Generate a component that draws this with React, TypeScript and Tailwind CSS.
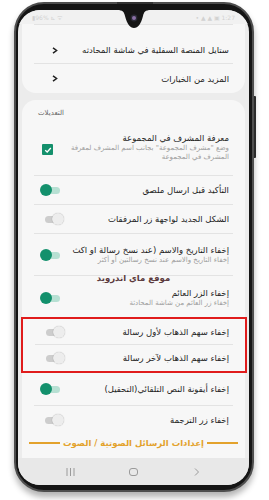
import React from 'react'

// ------------------------------------------------------------
// Small widgets
// ------------------------------------------------------------

function Toggle({ on }: { on: boolean }) {
  return (
    <div className="relative w-[24px] h-[12px] shrink-0">
      {on ? (
        <>
          <div className="absolute left-[5px] right-[4px] top-[3px] h-[7px] rounded-full bg-[#b7e0d3]" />
          <div className="absolute left-0 top-0 w-[12px] h-[12px] rounded-full bg-[#13906c]" />
        </>
      ) : (
        <>
          <div className="absolute left-[5px] right-[4px] top-[3px] h-[7px] rounded-full bg-[#cdcdcd]" />
          <div className="absolute right-0 top-0 w-[12px] h-[12px] rounded-full bg-[#ededed] shadow-[0_0_1px_rgba(0,0,0,0.35)]" />
        </>
      )}
    </div>
  )
}

function Checkbox() {
  return (
    <div className="w-[24px] shrink-0 flex justify-end pl-[2px]">
      <div className="w-[11px] h-[11px] rounded-[1px] bg-[#14906c] flex items-center justify-center">
        <svg width="8" height="8" viewBox="0 0 8 8">
          <path d="M1.2 4.2 L3.2 6 L6.8 2" fill="none" stroke="#fff" strokeWidth="1.3" />
        </svg>
      </div>
    </div>
  )
}

function Sep() {
  return <div className="mx-[12px] h-px bg-[#e3e3e3] shrink-0" />
}

// ------------------------------------------------------------
// Rows
// ------------------------------------------------------------

function Row({
  title,
  summary,
  widget,
  h,
}: {
  title: string
  summary?: string
  widget: React.ReactNode
  h: string
}) {
  return (
    <div dir="rtl" className={`flex items-center pr-[16px] pl-[18px] gap-[10px] shrink-0 ${h}`}>
      <div className="flex-1 min-w-0">
        <div className="text-[8.5px] leading-[12px] text-[#1e1e1e] whitespace-nowrap">{title}</div>
        {summary && (
          <div className="text-[7px] leading-[9px] text-[#9d9d9d] whitespace-nowrap">{summary}</div>
        )}
      </div>
      {widget}
    </div>
  )
}

function LinkRow({ title, h, extra }: { title: string; h: string; extra?: string }) {
  return (
    <div dir="rtl" className={`flex items-center pr-[16px] pl-[18px] shrink-0 ${h} ${extra ?? ''}`}>
      <div className="flex-1 text-[8.5px] leading-[12px] text-[#1e1e1e]">{title}</div>
      <svg width="6" height="7" viewBox="0 0 6 7" className="shrink-0">
        <path d="M1 0.8 L4.6 3.5 L1 6.2" fill="none" stroke="#222" strokeWidth="1.5" />
      </svg>
      <div className="w-[12px] shrink-0" />
    </div>
  )
}

// ------------------------------------------------------------
// App
// ------------------------------------------------------------

export default function App() {
  return (
    <div className="w-[269px] h-[500px] bg-white overflow-hidden font-['DejaVu_Sans',sans-serif] pt-[2px] pl-[14px]">
      {/* Phone body */}
      <div className="relative w-[240px] h-[490px] rounded-[30px] bg-[#151515] border-2 border-[#4e4e4e] pt-[6px] pb-[5px] pl-[2px] pr-[3px] shadow-[0_5px_6px_rgba(0,0,0,0.3)]">
        {/* side button */}
        <div className="absolute -right-[4px] top-[92px] w-[2px] h-[62px] bg-[#2a2a2a] rounded-r-[1px]" />
        {/* speaker */}
        <div className="absolute left-[101px] top-[-2px] w-[36px] h-[2px] bg-[#333]" />

        {/* Screen */}
        <div className="relative h-full rounded-[22px] overflow-hidden bg-[#ececec] flex flex-col">
          {/* notch */}
          <div className="absolute left-[99px] top-0 w-[34px] h-[20px]">
            <svg width="34" height="20" viewBox="0 0 34 20">
              <path d="M0 0 C6 0 7 2 8 6 C10 14 13 18 17 18 C21 18 24 14 26 6 C27 2 28 0 34 0 Z" fill="#151515" />
              <circle cx="17" cy="8" r="3.4" fill="#2a2a35" />
              <circle cx="17" cy="8" r="2" fill="#8a6fa5" />
            </svg>
          </div>

          {/* status bar */}
          <div className="h-[14px] shrink-0 flex items-center justify-between px-[14px] text-[6px] text-[#d2d2d2] bg-[#f1f1f1]">
            <span>▮96% ⊾ ᯤ</span>
            <span>• ▲ ▲ ▣ 1:27</span>
          </div>

          {/* content */}
          <div className="flex-1 min-h-0 overflow-hidden flex flex-col">
            {/* card 1 */}
            <div className="mx-[4px] rounded-b-[14px] bg-[#f7f7f7] flex flex-col shrink-0">
              <Sep />
              <LinkRow title="ستايل المنصة السفلية في شاشة المحادثه" h="h-[38px]" extra="pt-[12px]" />
              <Sep />
              <LinkRow title="المزيد من الخيارات" h="h-[29px]" />
            </div>

            {/* card 2 */}
            <div className="relative mt-[7px] mx-[4px] rounded-t-[14px] bg-[#f7f7f7] flex flex-col shrink-0">
              <div className="h-[27px] shrink-0 pl-[16px] pt-[9px] text-[7px] leading-[9px] text-[#666]">التعديلات</div>

              <div dir="rtl" className="flex items-start pr-[16px] pl-[18px] gap-[10px] h-[48px] pt-[5px] shrink-0">
                <div className="flex-1 min-w-0">
                  <div className="text-[8.5px] leading-[12px] text-[#1e1e1e]">معرفة المشرف في المجموعة</div>
                  <div className="text-[7px] leading-[9px] text-[#9d9d9d] whitespace-nowrap">
                    وضع "مشرف المجموعة" بجانب اسم المشرف لمعرفة
                    <br />
                    المشرف في المجموعة
                  </div>
                </div>
                <div className="pt-[12px]">
                  <Checkbox />
                </div>
              </div>
              <Sep />
              <Row title="التأكيد قبل ارسال ملصق" widget={<Toggle on />} h="h-[28px]" />
              <Sep />
              <Row title="الشكل الجديد لواجهة زر المرفقات" widget={<Toggle on={false} />} h="h-[28px]" />
              <Sep />
              <Row
                title="إخفاء التاريخ والاسم (عند نسخ رسالة او اكث"
                summary="إخفاء التاريخ والاسم عند نسخ رسالتين أو أكثر"
                widget={<Toggle on />}
                h="h-[41px]"
              />
              <Sep />
              <Row
                title="إخفاء الزر العائم"
                summary="إخفاء زر العائم من شاشة المحادثة"
                widget={<Toggle on />}
                h="h-[41px] pt-[2px]"
              />

              {/* highlighted */}
              <div className="-mx-[1px] -mr-[2px] border-2 border-[#e01c1c] flex flex-col shrink-0">
                <Row title="إخفاء سهم الذهاب لأول رسالة" widget={<Toggle on={false} />} h="h-[25px]" />
                <Sep />
                <Row title="إخفاء سهم الذهاب لآخر رسالة" widget={<Toggle on={false} />} h="h-[26px]" />
              </div>

              <Row title="إخفاء أيقونة النص التلقائي(التحقيل)" widget={<Toggle on />} h="h-[32px]" />
              <Sep />
              <Row title="إخفاء زر الترجمة" widget={<Toggle on={false} />} h="h-[28px]" />

              {/* section heading */}
              <div dir="rtl" className="h-[18px] flex items-center gap-[3px] px-[7px] shrink-0">
                <div className="flex-1 h-[2px] bg-[#e3a22c]" />
                <span className="text-[8.5px] font-bold text-[#e3a22c] whitespace-nowrap">إعدادات الرسائل الصوتية / الصوت</span>
                <div className="flex-1 h-[2px] bg-[#e3a22c]" />
              </div>
              <div className="h-[10px]" />

              {/* watermark */}
              <div className="absolute left-0 right-0 top-[172px] text-center text-[8.5px] font-bold text-[#5b3a3c]">
                موقع ماي اندرويد
              </div>
            </div>
          </div>

          {/* nav bar */}
          <div className="h-[27px] shrink-0 bg-[#e8e8e8] flex items-center justify-center gap-[54px]">
            <svg width="9" height="8" viewBox="0 0 9 8">
              <path d="M1 0 V8 M4.5 0 V8 M8 0 V8" stroke="#9a9a9a" strokeWidth="1" />
            </svg>
            <div className="w-[9px] h-[8px] rounded-[3px] border border-[#9a9a9a]" />
            <svg width="9" height="8" viewBox="0 0 9 8">
              <path d="M3 0.5 L6.5 4 L3 7.5" fill="none" stroke="#9a9a9a" strokeWidth="1" />
            </svg>
          </div>
        </div>
      </div>
    </div>
  )
}
